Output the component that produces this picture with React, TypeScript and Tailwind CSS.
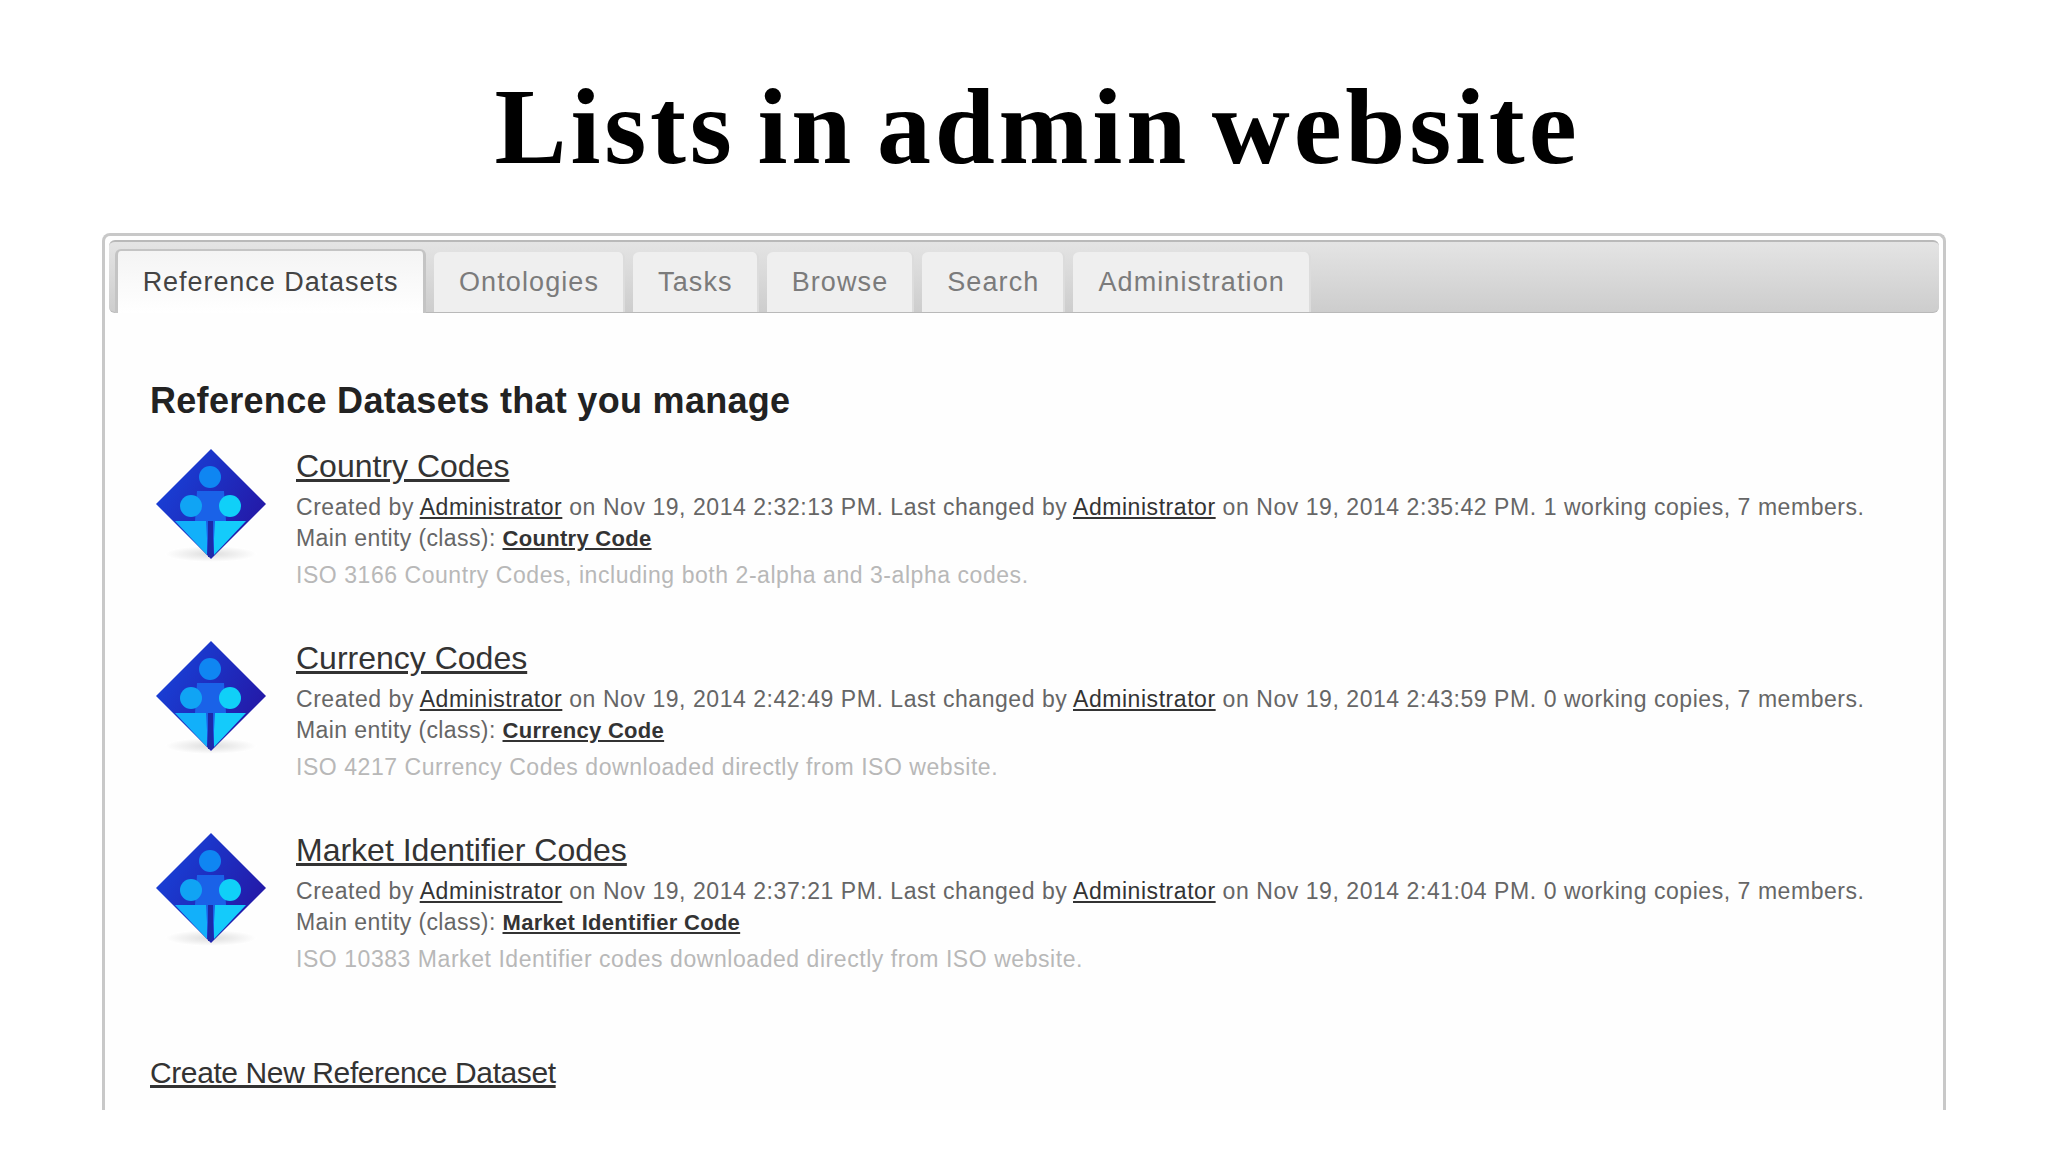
import type { ReactNode } from 'react';

const tabs = ['Ontologies', 'Tasks', 'Browse', 'Search', 'Administration'];

const datasets = [
  {
    name: 'Country Codes',
    created: 'Nov 19, 2014 2:32:13 PM',
    changed: 'Nov 19, 2014 2:35:42 PM',
    copies: 1,
    entity: 'Country Code',
    desc: 'ISO 3166 Country Codes, including both 2-alpha and 3-alpha codes.',
  },
  {
    name: 'Currency Codes',
    created: 'Nov 19, 2014 2:42:49 PM',
    changed: 'Nov 19, 2014 2:43:59 PM',
    copies: 0,
    entity: 'Currency Code',
    desc: 'ISO 4217 Currency Codes downloaded directly from ISO website.',
  },
  {
    name: 'Market Identifier Codes',
    created: 'Nov 19, 2014 2:37:21 PM',
    changed: 'Nov 19, 2014 2:41:04 PM',
    copies: 0,
    entity: 'Market Identifier Code',
    desc: 'ISO 10383 Market Identifier codes downloaded directly from ISO website.',
  },
];

function DatasetIcon() {
  return (
    <svg width="112" height="124" viewBox="0 0 112 124" className="shrink-0 blur-[0.5px]">
      <defs>
        <linearGradient id="diamond" x1="0" y1="0" x2="1" y2="0.6">
          <stop offset="0" stopColor="#1648e0" />
          <stop offset="1" stopColor="#2418a6" />
        </linearGradient>
        <radialGradient id="floor">
          <stop offset="0" stopColor="#dddddd" />
          <stop offset="1" stopColor="#ffffff" />
        </radialGradient>
      </defs>
      <ellipse cx="56" cy="106" rx="46" ry="8" fill="url(#floor)" />
      <path d="M56 1 L111 56 L56 111 L1 56 Z" fill="url(#diamond)" />
      <path d="M20 73 H52 V107 Z" fill="#12b0fa" />
      <path d="M91 73 H59 V107 Z" fill="#14cbfb" />
      <path d="M42 43 H69 L71 73 H60 L58 108 H53 L51 73 H40 Z" fill="#1a62e8" />
      <path d="M53 73 H58 V109 H53 Z" fill="#1c2aa8" />
      <circle cx="55" cy="29" r="11" fill="#0f86f2" />
      <circle cx="36" cy="58" r="11" fill="#10a4f4" />
      <circle cx="75" cy="58" r="11" fill="#10d0f8" />
    </svg>
  );
}

function Link({ children, bold }: { children: ReactNode; bold?: boolean }) {
  return (
    <a className={bold ? 'underline font-bold text-[#333] text-[22px] tracking-[0.3px]' : 'underline text-[#333]'}>
      {children}
    </a>
  );
}

export default function App() {
  return (
    <div className="w-[2048px] h-[1152px] bg-white overflow-hidden font-['Liberation_Sans',sans-serif]">
      <h1 className="h-[233px] pt-[74px] pl-[27px] text-center font-['Liberation_Serif',serif] font-bold text-[108px] tracking-[3.8px] [word-spacing:-9px] leading-[106px] text-black">
        Lists in admin website
      </h1>

      <div className="mx-[102px] h-[877px] border-x-[3px] border-t-[3px] border-[#c8c8c8] rounded-t-lg p-[4px] pb-0 bg-[#fefefe]">
        <div className="flex h-[73px] items-end gap-[8px] rounded-md border-t-[2px] border-b border-[#b9b9b9] bg-gradient-to-b from-[#e4e4e4] to-[#cdcdcd] pl-[6px]">
          <div className="h-[64px] w-[311px] -mb-px flex items-center justify-center rounded-t-md border-x-[3px] border-t-[2px] border-[#c4c4c4] border-b-0 bg-gradient-to-b from-[#f4f4f4] to-white text-[27px] tracking-[0.95px] text-[#444]">
            Reference Datasets
          </div>
          {tabs.map((tab) => (
            <div
              key={tab}
              className="h-[60px] flex items-center rounded-t-md border-r-[2px] border-[#dcdcdc] bg-[#efefef] pl-[25px] pr-[24px] text-[27px] tracking-[1.1px] text-[#7b7b7b]"
            >
              {tab}
            </div>
          ))}
        </div>

        <div className="pl-[41px] pt-[66px]">
          <h2 className="text-[36px] tracking-[0.3px] leading-[44px] font-bold text-[#222]">
            Reference Datasets that you manage
          </h2>

          <div className="mt-[22px] flex flex-col gap-[38px]">
            {datasets.map((d) => (
              <div key={d.name} className="flex h-[154px] gap-[29px]">
                <div className="pl-[5px] pt-[5px] -mt-[2px]">
                  <DatasetIcon />
                </div>
                <div className="text-[23px] tracking-[0.55px] text-[#666]">
                  <div className="text-[32px] tracking-normal leading-[42px]">
                    <Link>{d.name}</Link>
                  </div>
                  <p className="leading-[32px] mt-[4px] whitespace-nowrap">
                    Created by <Link>Administrator</Link> on {d.created}. Last changed by <Link>Administrator</Link> on{' '}
                    {d.changed}. {d.copies} working copies, 7 members.
                  </p>
                  <p className="leading-[32px] -mt-px tracking-[0.4px]">
                    Main entity (class): <Link bold>{d.entity}</Link>
                  </p>
                  <p className="leading-[32px] mt-[4px] text-[#b8b8b8]">{d.desc}</p>
                </div>
              </div>
            ))}
          </div>

          <div className="mt-[70px] text-[30px] tracking-[-0.4px] leading-[40px]">
            <Link>Create New Reference Dataset</Link>
          </div>
        </div>
      </div>
    </div>
  );
}
